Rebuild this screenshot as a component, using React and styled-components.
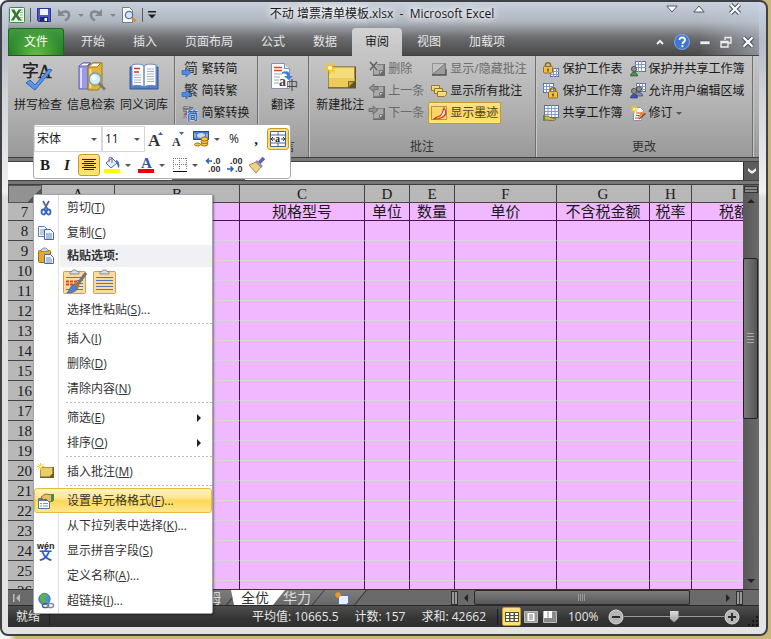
import React, { useState } from 'react';
import styled, { createGlobalStyle, css } from 'styled-components';

const columns = [
  { name: 'A', width: 73, title: '' },
  { name: 'B', width: 125, title: '' },
  { name: 'C', width: 125, title: '规格型号' },
  { name: 'D', width: 45, title: '单位' },
  { name: 'E', width: 45, title: '数量' },
  { name: 'F', width: 102, title: '单价' },
  { name: 'G', width: 93, title: '不含税金额' },
  { name: 'H', width: 42, title: '税率' },
  { name: 'I', width: 85, title: '税额' },
];

const rows = Array.from({ length: 19 }, (_, i) => i + 8);

const tabs = ['开始', '插入', '页面布局', '公式', '数据', '审阅', '视图', '加载项'];

//---------------------------------------------------------------------
// icons

const ExcelIcon = () => (
  <Icon $w={16} viewBox="0 0 16 16">
    <rect x=".5" y=".5" width="15" height="15" rx="1" fill="#f4faf2" stroke="#3d8b3f" />
    <path d="M11 3h3M11 5.500h3M11 8h3M11 10.500h3M11 13h3" stroke="#8cc08a" />
    <path d="M2 2.500h3.500L7.300 6 9.500 2.500h3L8.800 8l4 5.500H9.300L7 10l-2.300 3.500h-3L5.400 8z" fill="#2c7d32" />
  </Icon>
);

const SaveIcon = () => (
  <Icon $w={16} viewBox="0 0 16 16">
    <path d="M1.500 1.500h13v13h-12l-1-1z" fill="#4a55c8" stroke="#2b348f" />
    <path d="M4 2h8v6H4z" fill="#eef2fb" />
    <path d="M4 10h8v4.500H4z" fill="#20286b" />
    <path d="M8.500 11h2.500v3H8.500z" fill="#fff" />
  </Icon>
);

const UndoIcon = ({ flip }) => (
  <Icon $w={14} viewBox="0 0 14 14">
    <g transform={flip ? 'matrix(-1 0 0 1 14 0)' : undefined}>
      <path d="M3 6c4-4 9-3 9 1 0 3-2 4.500-4 5.500" fill="none" stroke="#85888d" strokeWidth="2.600" />
      <path d="M1 1v7h7z" fill="#85888d" />
    </g>
  </Icon>
);

const PreviewIcon = () => (
  <Icon $w={16} viewBox="0 0 16 16">
    <path d="M1.500.5h7l3 3v12h-10z" fill="#fff" stroke="#6d7c95" />
    <circle cx="8" cy="8" r="3.700" fill="#cfe6f8" stroke="#54708f" strokeWidth="1.200" />
    <path d="M11 11l3.500 3.500" stroke="#dd8a26" strokeWidth="2.600" />
  </Icon>
);

const SpellIcon = () => (
  <Icon $w={32} viewBox="0 0 32 32">
    <text x="0" y="16" fontSize="17" fontWeight="500" fontFamily="Noto Sans CJK SC, sans-serif" fill="#222">字</text>
    <text x="16" y="17" fontSize="19" fontFamily="Liberation Serif, serif" fill="#222" stroke="#222" strokeWidth=".4">A</text>
    <path d="M4 22l4-3 5 5L27 8l3 1-17 20z" fill="#5b95ea" stroke="#2f64bd" />
  </Icon>
);

const ResearchIcon = () => (
  <Icon $w={32} viewBox="0 0 32 32">
    <path d="M4 5l4-3h8l-3 3v23H4z" fill="#9a9ae8" stroke="#6464b4" />
    <path d="M4 5l4-3h7l-3 3z" fill="#fff" stroke="#6464b4" />
    <path d="M6 7v20" stroke="#dcdcfc" strokeWidth="2" />
    <path d="M13 6l5-4h9v22l-4 5H13z" fill="#e0b33a" stroke="#a07a17" />
    <path d="M13 6l5-4h8l-4 4z" fill="#fff8dc" stroke="#a07a17" />
    <path d="M15.500 8v19" stroke="#f8e08a" strokeWidth="2" />
    <circle cx="20" cy="18" r="6" fill="#d3ebf8" stroke="#7c9fae" strokeWidth="1.500" />
    <circle cx="19" cy="17" r="2.500" fill="#fff" />
    <path d="M24 22.500l6 6" stroke="#777" strokeWidth="2.600" />
  </Icon>
);

const BookIcon = () => (
  <Icon $w={32} viewBox="0 0 32 32">
    <path d="M2 6h28v22H2z" fill="#4f7fcb" stroke="#33599d" />
    <path d="M4 4c5-1.500 10-1 12 1v21c-3-2-8-2-12-1zM28 4c-5-1.500-10-1-12 1v21c3-2 8-2 12-1z" fill="#fff" stroke="#6c89b8" />
    <path d="M6 7.500h6M6 11h5" stroke="#d4302a" strokeWidth="1.500" />
    <path d="M6 14h7M6 16.500h7M6 19h7M6 21.500h7M19 8h7M19 10.500h7M19 13h7M19 15.500h7M19 18h7M19 20.500h7" stroke="#9fb0c9" />
  </Icon>
);

const ConvertIcon = ({ char, both }) => (
  <Icon $w={16} viewBox="0 0 16 16">
    <text x={both ? 0 : 2} y="12" fontSize={both ? 12 : 14} fontFamily="Noto Sans CJK SC, sans-serif" fill={both ? '#666' : '#333'}>
      {char}
    </text>
    {both ? (
      <>
        <path d="M5 5h11v11H5z" fill="#c5d2e8" />
        <text x="5" y="15" fontSize="11" fontWeight="bold" fontFamily="Noto Sans CJK SC, sans-serif" fill="#2467c4">简</text>
      </>
    ) : (
      <path d="M0 9.500h4V7l5 4.500-5 4.500v-2.500H0z" fill="#4c8ae6" stroke="#2b60b6" strokeWidth=".7" />
    )}
  </Icon>
);

const TranslateIcon = () => (
  <Icon $w={32} viewBox="0 0 32 32">
    <path d="M4.500 2.500h13l5 5v20h-18z" fill="#fff" stroke="#8292b4" />
    <path d="M17.500 2.500v5h5" fill="#dfe6f2" stroke="#8292b4" />
    <path d="M7 6.500h8M7 9.500h8" stroke="#d0492b" strokeWidth="1.500" />
    <path d="M7 13h8M7 16h6M7 19h5M7 22h5" stroke="#8ea4cc" />
    <path d="M15 11c5-2 8 0 8 4h3l-4.500 4-4.500-4h3c0-2-2-3-5-2z" fill="#3f7fdc" />
    <text x="12" y="25" fontSize="14" fontWeight="bold" fontFamily="Liberation Serif, serif" fill="#444">a</text>
    <text x="19" y="29" fontSize="12" fontFamily="Noto Sans CJK SC, sans-serif" fill="#444">中</text>
  </Icon>
);

const Burst = ({ x = 0, y = 0, s = 1 }) => (
  <g transform={`translate(${x} ${y}) scale(${s})`} stroke="#f5c518" strokeWidth="1.600">
    <path d="M6 0v12M0 6h12M1.500 1.500l9 9M10.500 1.500l-9 9" />
    <circle cx="6" cy="6" r="2" fill="#fff9c4" stroke="none" />
  </g>
);

const NewNoteIcon = () => (
  <Icon $w={32} viewBox="0 0 32 32">
    <path d="M4 5.500h28v22H4z" fill="#5f5228" />
    <path d="M4.500 6h26v14l-6 6h-20z" fill="#f3dc7c" stroke="#a58b32" />
    <path d="M5 17h25.500v3l-6 6H5z" fill="#ecca5c" />
    <path d="M24.500 26v-5.500h6z" fill="#c8a640" stroke="#7e6720" />
    <Burst x={0} y={1} />
  </Icon>
);

const GreyNoteIcon = ({ kind }) => (
  <Icon $w={16} viewBox="0 0 16 16">
    <path d="M4 3h12v12H4z" fill="#6a6a6a" />
    <path d="M4.500 3.500h10v6l-4 4h-6z" fill="#a9a9a9" stroke="#808080" />
    <path d="M10.500 13.500v-4h4z" fill="#c4c4c4" stroke="#777" />
    {kind === 'delete' && (
      <>
        <path d="M1 1l7 8M8 1L1 9" stroke="#c0c0c0" strokeWidth="3.400" />
        <path d="M1 1l7 8M8 1L1 9" stroke="#606060" strokeWidth="1.600" />
      </>
    )}
    {kind === 'prev' && <path d="M0 5l5-4v2.500h4v3H5V9z" fill="#909090" stroke="#5c5c5c" strokeWidth=".7" />}
    {kind === 'next' && <path d="M9 5L4 1v2.500H0v3h4V9z" fill="#909090" stroke="#5c5c5c" strokeWidth=".7" />}
  </Icon>
);

const ToggleNoteIcon = () => (
  <Icon $w={16} viewBox="0 0 16 16">
    <path d="M1.500 2.500h13v11h-13z" fill="none" stroke="#666" strokeDasharray="1 1" />
    <path d="M14.500 2.500v11h-13z" fill="#9c9c9c" stroke="#777" />
    <path d="M1 14h14V8" fill="none" stroke="#555" strokeWidth="1.400" />
  </Icon>
);

const AllNotesIcon = () => (
  <Icon $w={16} viewBox="0 0 16 16">
    <g fill="#f5dc78" stroke="#94792a">
      <path d="M.5 2.500h8v5h-8z" />
      <path d="M3.500 5.500h8v5h-8z" />
      <path d="M6.500 8.500h9v3l-2 2h-7z" />
    </g>
  </Icon>
);

const InkIcon = () => (
  <Icon $w={16} viewBox="0 0 16 16">
    <path d="M.5 1.500h15v13H.5z" fill="none" stroke="#6a5420" strokeDasharray="1 1" />
    <path d="M13 3c3 4 2 8-7 9 4-2 4-5 7-9z" fill="#fff" />
    <path d="M3 14c3-3 5-2 7-4s2-5 3-7c3 4 2 8-3 10-2 1-5 1-7 1z" fill="none" stroke="#d2332b" strokeWidth="1.200" />
  </Icon>
);

const TableMark = ({ x, y, w, h }) => (
  <g>
    <rect x={x + 0.5} y={y + 0.5} width={w - 1} height={h - 1} fill="#fff" stroke="#5671a8" />
    <path
      d={`M${x} ${y + 3.5}h${w}M${x} ${y + 6.5}h${w}M${x + 3.5} ${y}v${h}M${x + 6.5} ${y}v${h}`}
      stroke="#8499c4"
    />
  </g>
);

const Lock = ({ x, y }) => (
  <g transform={`translate(${x} ${y})`}>
    <path d="M2.500 5V3c0-3 5-3 5 0v2" fill="none" stroke="#8c6a1d" strokeWidth="1.600" />
    <rect x=".5" y="4.500" width="9" height="6.500" rx="1" fill="#f1bd49" stroke="#9b6f16" />
    <path d="M5 6.500v3" stroke="#5c420d" strokeWidth="1.400" />
  </g>
);

const Person = ({ x, y, color }) => (
  <g transform={`translate(${x} ${y})`}>
    <circle cx="4" cy="3" r="2.600" fill="#8c8c8c" stroke="#444" strokeWidth=".8" />
    <path d="M.5 10c0-5 7-5 7 0z" fill={color} stroke="#333" strokeWidth=".6" />
  </g>
);

const ProtectSheetIcon = () => (
  <Icon $w={16} viewBox="0 0 16 16">
    <TableMark x={7} y={7} w={9} h={9} />
    <Lock x={0} y={1} />
  </Icon>
);

const ProtectBookIcon = () => (
  <Icon $w={16} viewBox="0 0 16 16">
    <TableMark x={0} y={0} w={11} h={10} />
    <Lock x={5} y={4} />
  </Icon>
);

const ShareBookIcon = () => (
  <Icon $w={16} viewBox="0 0 16 16">
    <rect x="1.500" y=".5" width="14" height="12" fill="#fff" stroke="#5671a8" />
    <path d="M1.500 3.500h14M1.500 6.500h14M1.500 9.500h14M5 .5v12M8.500.5v12M12 .5v12" stroke="#8499c4" />
    <path d="M1 11h3l5 2h4c0 2-3 3-5 2.500L3 15H1z" fill="#d6b257" stroke="#665022" strokeWidth=".7" />
    <path d="M0 10h2v6H0z" fill="#4a9146" />
  </Icon>
);

const ProtectShareIcon = () => (
  <Icon $w={16} viewBox="0 0 16 16">
    <TableMark x={5} y={0} w={11} h={11} />
    <Person x={0} y={5} color="#3c9a3f" />
  </Icon>
);

const UsersIcon = () => (
  <Icon $w={16} viewBox="0 0 16 16">
    <TableMark x={6} y={0} w={10} h={9} />
    <Person x={5} y={3} color="#7a90c4" />
    <Person x={0} y={5} color="#3457c9" />
  </Icon>
);

const TrackIcon = () => (
  <Icon $w={16} viewBox="0 0 16 16">
    <path d="M3.500 2.500h7l3 3-2 10h-8z" fill="#fff" stroke="#8a93a8" />
    <path d="M6 8h6M6 10.500h5M5 13h4" stroke="#c9402c" />
    <path d="M15 8l-7 5 3-6z" fill="#e87d34" />
    <path d="M15.500 8.500L9 14" stroke="#8c4318" strokeWidth="1.600" />
    <Burst x={0} y={0} s={0.7} />
  </Icon>
);

const GrowIcon = ({ shrink }) => (
  <Icon $w={16} viewBox="0 0 16 16">
    <text x={shrink ? 2 : 0} y="15" fontSize={shrink ? 12 : 17} fontWeight="bold" fontFamily="Liberation Serif, serif" fill="#333">
      A
    </text>
    <path d={shrink ? 'M9 1h5l-2.500 3z' : 'M10 4h5l-2.500-3z'} fill="#3c5fae" />
  </Icon>
);

const MoneyIcon = () => (
  <Icon $w={16} viewBox="0 0 16 16">
    <rect x=".5" y=".5" width="15" height="8" fill="#4f7cc4" stroke="#284e94" />
    <ellipse cx="8" cy="4.500" rx="4" ry="2.500" fill="#c8dcf5" />
    <path d="M2 2.500v4M14 2.500v4" stroke="#c8dcf5" />
    <g fill="#f3c74a" stroke="#a06e10">
      <ellipse cx="11.500" cy="13" rx="3.500" ry="2" />
      <ellipse cx="11.500" cy="10.500" rx="3.500" ry="2" />
      <ellipse cx="11.500" cy="8" rx="3.500" ry="2" />
      <ellipse cx="4.500" cy="13.500" rx="3" ry="1.500" />
    </g>
  </Icon>
);

const MergeIcon = () => (
  <Icon $w={16} viewBox="0 0 16 16">
    <path d="M.5.5h15v15H.5z" fill="#fff" stroke="#4467a5" />
    <path d="M.5 4h15M.5 12h15M8 .5V4M8 12v3.500" stroke="#4467a5" />
    <path d="M1 8h4M11 8h4M3 6L1 8l2 2M13 6l2 2-2 2" fill="none" stroke="#333" />
    <text x="5" y="11" fontSize="10" fontWeight="bold" fontFamily="Liberation Serif, serif" fill="#222">a</text>
  </Icon>
);

const CenterIcon = () => (
  <Icon $w={16} viewBox="0 0 16 16">
    <path d="M1 2.500h14M3 4.500h10M1 6.500h14M3 8.500h10M1 10.500h14M3 12.500h10" stroke="#222" />
  </Icon>
);

const FillIcon = () => (
  <Icon $w={16} viewBox="0 0 16 16">
    <path d="M2 6l6-5 5 5-6 5z" fill="#e5ecf7" stroke="#56709c" />
    <path d="M5 5V1c0-1 3-1 3 0v5" fill="none" stroke="#56709c" />
    <path d="M12 3c3 1 4 4 3 8-2-1-1-4-3-5z" fill="#3f6fc0" />
    <path d="M0 12h16v4H0z" fill="#ffff00" />
  </Icon>
);

const FontColorIcon = () => (
  <Icon $w={16} viewBox="0 0 16 16">
    <text x="3" y="11" fontSize="15" fontWeight="bold" fontFamily="Liberation Serif, serif" fill="#3457a6">A</text>
    <path d="M0 12h16v4H0z" fill="#f00000" />
  </Icon>
);

const BorderIcon = () => (
  <Icon $w={14} viewBox="0 0 14 14">
    <path d="M0 .5h14M0 6.500h14M.5 0v12M6.500 0v12M13.500 0v12" fill="none" stroke="#777" strokeDasharray="1 1" />
    <path d="M0 13.500h14" stroke="#111" />
  </Icon>
);

const DecimalIcon = ({ less }) => (
  <Icon $w={16} viewBox="0 0 16 16">
    <g fontSize="9" fontWeight="bold" fontFamily="Liberation Sans, sans-serif" fill="#333">
      <text x={less ? 3 : 8} y="7">{less ? '.00' : '.0'}</text>
      <text x={less ? 8 : 3} y="15">{less ? '.0' : '.00'}</text>
    </g>
    <path
      d={less ? 'M0 12h5M3.500 9.500L6 12l-2.500 2.500' : 'M7 4H2M4 1.500L1.500 4 4 6.500'}
      fill="none"
      stroke="#2e62b8"
      strokeWidth="1.500"
    />
  </Icon>
);

const BrushIcon = () => (
  <Icon $w={16} viewBox="0 0 16 16">
    <path d="M15 1l-5 5" stroke="#6a5fae" strokeWidth="3.500" />
    <path d="M0 8l7-3 5 5-5 6z" fill="#eed182" stroke="#957327" strokeWidth=".8" />
    <path d="M7 4l6 6" stroke="#8b93a3" strokeWidth="2.500" />
  </Icon>
);

const CutIcon = () => (
  <Icon $w={16} viewBox="0 0 16 16">
    <path d="M5 1l5 9M11 1L6 10" stroke="#56688a" strokeWidth="1.700" />
    <ellipse cx="5.500" cy="12" rx="2" ry="2.500" fill="none" stroke="#3468c8" strokeWidth="1.800" />
    <ellipse cx="10.500" cy="12" rx="2" ry="2.500" fill="none" stroke="#3468c8" strokeWidth="1.800" />
  </Icon>
);

const CopyIcon = () => (
  <Icon $w={16} viewBox="0 0 16 16">
    <path d="M.5 1.500h6l3 3v7h-9z" fill="#f3f7fd" stroke="#5b80bd" />
    <path d="M2 5h5M2 7h5M2 9h5" stroke="#7fa0d4" />
    <path d="M6.500 4.500h6l3 3v7h-9z" fill="#f3f7fd" stroke="#3f69ad" />
    <path d="M8 9h6M8 11h6M8 13h6" stroke="#5f88c8" />
  </Icon>
);

const PasteIcon = () => (
  <Icon $w={16} viewBox="0 0 16 16">
    <rect x=".5" y="2.500" width="12" height="12" rx="1" fill="#e2a92e" stroke="#96701c" />
    <path d="M3 3.500h7V2L8 0H5L3 2z" fill="#d3d6dc" stroke="#777" strokeWidth=".7" />
    <path d="M6.500 6.500h6l3 3v6h-9z" fill="#f3f7fd" stroke="#4c6a9e" />
    <path d="M8 10h5M8 12h6M8 14h6" stroke="#6c8cc4" />
  </Icon>
);

const ClipboardIcon = ({ brush }) => (
  <Icon $w={24} viewBox="0 0 24 24">
    <rect x=".5" y="1.500" width="22" height="22" rx="1" fill="#fcd9a0" stroke="#cf9f55" />
    <path d="M7 4V1.500h2L10 0h3l1 1.500h2V4z" fill="#d8dde4" stroke="#6f7b8c" strokeWidth=".8" />
    <path d="M3 7.500h17M3 10.500h17M3 13.500h17M3 16.500h17M3 19.500h17" stroke="#5577b8" />
    {brush && (
      <>
        <path d="M2 10h12v7H2z" fill="#fcd9a0" />
        <path d="M3 11.500h12M3 14.500h10" stroke="#e0441e" strokeWidth="2" strokeDasharray="3 1" />
        <path d="M23 3l-9 12" stroke="#6f7277" strokeWidth="3" />
        <path d="M11 14l4 4c-2 4-6 5-11 5 3-3 3-7 7-9z" fill="#4d80c9" stroke="#355b97" strokeWidth=".6" />
        <path d="M12 12l5 4-2 2-4-4z" fill="#b7752f" />
      </>
    )}
  </Icon>
);

const InsertNoteIcon = () => (
  <Icon $w={16} viewBox="0 0 16 16">
    <path d="M2 3h14v11H2z" fill="#6e5c20" />
    <path d="M2.500 3.500h12v6l-3 3h-9z" fill="#e9cf67" />
    <Burst x={-1} y={-1} s={0.6} />
  </Icon>
);

const FormatIcon = () => (
  <Icon $w={16} viewBox="0 0 16 16">
    <path d="M.5 5.500h11v10H.5z" fill="#fff" stroke="#5b76ae" />
    <path d="M.5 7h11" stroke="#5b76ae" strokeWidth="2" />
    <path d="M2 10.500h2M5 10.500h5M2 13h2M5 13h5" stroke="#7c92bf" strokeWidth="1.200" />
    <path d="M3 4l4-3 8 1v6l-4 1-3-3-3 1z" fill="#e7bd69" stroke="#6d5626" strokeWidth=".8" />
    <path d="M13 1h3v7h-3z" fill="#36954b" />
  </Icon>
);

const PinyinIcon = () => (
  <Icon $w={18} viewBox="0 0 18 18">
    <text x="0" y="7" fontSize="9" fontWeight="bold" fontFamily="Liberation Sans, sans-serif" fill="#222">wén</text>
    <text x="2" y="17" fontSize="13" fontWeight="bold" fontFamily="Noto Sans CJK SC, sans-serif" fill="#2b57c8">文</text>
  </Icon>
);

const LinkIcon = () => (
  <Icon $w={16} viewBox="0 0 16 16">
    <circle cx="6.500" cy="6" r="5.700" fill="#4b93df" stroke="#2c5f94" strokeWidth=".8" />
    <path d="M4 1c3-1 5 0 5 2S6 4 6 6s3 1 3 3-3 2-4 1S1 6 2 4z" fill="#5db546" />
    <rect x="4.500" y="10.500" width="6" height="4" rx="2" fill="none" stroke="#4f6283" strokeWidth="1.500" />
    <rect x="9.500" y="10.500" width="6" height="4" rx="2" fill="none" stroke="#7b8ca8" strokeWidth="1.500" />
  </Icon>
);

const HelpIcon = () => (
  <Icon $w={16} viewBox="0 0 16 16">
    <circle cx="8" cy="8" r="7.500" fill="#3f78d4" stroke="#7da7e8" />
    <path d="M5.500 6c0-3.500 5.500-3.200 5.500 0 0 2-2.500 2-2.500 4" fill="none" stroke="#fff" strokeWidth="1.800" />
    <circle cx="8.400" cy="12.200" r="1.100" fill="#fff" />
  </Icon>
);

const Chevron = ({ up }) => (
  <Icon $w={12} viewBox="0 0 12 12">
    <path d={up ? 'M.8 9h10.400L6 3z' : 'M.8 3h10.400L6 9z'} fill="#fff" stroke="#4c5562" />
  </Icon>
);

const CrossIcon = () => (
  <Icon $w={12} viewBox="0 0 12 12">
    <path d="M1.500 1.500l9 9M10.500 1.500l-9 9" stroke="#4c5562" strokeWidth="4.400" />
    <path d="M1.500 1.500l9 9M10.500 1.500l-9 9" stroke="#fff" strokeWidth="2.200" />
  </Icon>
);

const CollapseIcon = () => (
  <Icon $w={8} viewBox="0 0 8 8"><path d="M1 6l3-3 3 3" fill="none" stroke="#eee" strokeWidth="2" /></Icon>
);
const MinIcon = () => (
  <Icon $w={10} viewBox="0 0 10 10"><path d="M0 4h10v3.500H0z" fill="#eee" stroke="#555" strokeWidth=".6" /></Icon>
);
const RestoreIcon = () => (
  <Icon $w={12} viewBox="0 0 12 12">
    <path d="M5 4V1.500h6V7H8M1 5.500h7V11H1zM1 6.500h7" fill="none" stroke="#eee" strokeWidth="1.400" />
  </Icon>
);

const ArrowIcon = ({ d, color = '#222' }) => (
  <Icon $w={8} viewBox="0 0 8 8"><path d={d} fill={color} /></Icon>
);

const NormalViewIcon = () => (
  <Icon $w={14} viewBox="0 0 14 14">
    <path d="M0 2h14v10H0z" fill="#5c5130" />
    <path d="M1 3h3v2H1zM5.500 3h3v2h-3zM10 3h3v2h-3zM1 6h3v2H1zM5.500 6h3v2h-3zM10 6h3v2h-3zM1 9h3v2H1zM5.500 9h3v2h-3zM10 9h3v2h-3z" fill="#fff" />
  </Icon>
);
const PageViewIcon = () => (
  <Icon $w={14} viewBox="0 0 14 14">
    <path d="M.5 1.500h13v11H.5z" fill="#9a9a9a" stroke="#bbb" />
    <path d="M3.500 3h7v8h-7z" fill="#fff" />
    <path d="M5 5h4M5 7h4M5 9h4" stroke="#777" />
  </Icon>
);
const BreakViewIcon = () => (
  <Icon $w={14} viewBox="0 0 14 14">
    <path d="M.5 1.500h13v11H.5z" fill="#8a8a8a" stroke="#bbb" />
    <path d="M1 1h3.500v7H1zM5.500 1H9v7H5.500z" fill="#fff" />
  </Icon>
);
const ZoomIcon = ({ plus }) => (
  <Icon $w={16} viewBox="0 0 16 16">
    <circle cx="8" cy="8" r="7" fill="#b5b5b5" stroke="#ddd" />
    <path d={plus ? 'M4 8h8M8 4v8' : 'M4 8h8'} stroke="#2c2c2c" strokeWidth="2" />
  </Icon>
);
const GripIcon = () => (
  <Icon $w={12} viewBox="0 0 12 12">
    <path d="M9 1h2v2H9zM9 5h2v2H9zM5 5h2v2H5zM9 9h2v2H9zM5 9h2v2H5zM1 9h2v2H1z" fill="#161616" />
  </Icon>
);
const NewSheetIcon = () => (
  <Icon $w={16} viewBox="0 0 16 16">
    <path d="M4.500 5.500h10v7l-2 2h-8z" fill="#e8eefc" stroke="#5c73ad" />
    <path d="M4 2v6M1 5h6M2 3l4 4M6 3L2 7" stroke="#f09a25" strokeWidth="1.300" />
  </Icon>
);

//---------------------------------------------------------------------

const menuItems = [
  { type: 'item', icon: <CutIcon />, label: '剪切', hotkey: 'T' },
  { type: 'item', icon: <CopyIcon />, label: '复制', hotkey: 'C' },
  { type: 'heading', icon: <PasteIcon />, label: '粘贴选项:' },
  { type: 'paste' },
  { type: 'item', label: '选择性粘贴', hotkey: 'S', dots: true },
  { type: 'separator' },
  { type: 'item', label: '插入', hotkey: 'I' },
  { type: 'item', label: '删除', hotkey: 'D' },
  { type: 'item', label: '清除内容', hotkey: 'N' },
  { type: 'separator' },
  { type: 'item', label: '筛选', hotkey: 'E', submenu: true },
  { type: 'item', label: '排序', hotkey: 'O', submenu: true },
  { type: 'separator' },
  { type: 'item', icon: <InsertNoteIcon />, label: '插入批注', hotkey: 'M' },
  { type: 'separator' },
  { type: 'item', icon: <FormatIcon />, label: '设置单元格格式', hotkey: 'F', dots: true, hot: true },
  { type: 'item', label: '从下拉列表中选择', hotkey: 'K', dots: true },
  { type: 'item', icon: <PinyinIcon />, label: '显示拼音字段', hotkey: 'S' },
  { type: 'item', label: '定义名称', hotkey: 'A', dots: true },
  { type: 'item', icon: <LinkIcon />, label: '超链接', hotkey: 'I', dots: true },
];

const ContextMenu = () => (
  <Menu>
    {menuItems.map((item, i) => {
      if (item.type === 'separator') return <MenuSeparator key={i} />;
      if (item.type === 'heading') {
        return (
          <MenuHeading key={i}>
            <MenuIcon>{item.icon}</MenuIcon>
            <span>{item.label}</span>
          </MenuHeading>
        );
      }
      if (item.type === 'paste') {
        return (
          <PasteRow key={i}>
            <PasteButton aria-label="粘贴"><ClipboardIcon brush /></PasteButton>
            <PasteButton aria-label="只保留文本"><ClipboardIcon /></PasteButton>
          </PasteRow>
        );
      }
      return (
        <MenuItem key={i} $hot={item.hot}>
          <MenuIcon>{item.icon}</MenuIcon>
          <span>
            {item.label}(<u>{item.hotkey}</u>){item.dots && '...'}
          </span>
          {item.submenu && <SubmenuArrow><ArrowIcon d="M2 0v8l4-4z" /></SubmenuArrow>}
        </MenuItem>
      );
    })}
  </Menu>
);

//---------------------------------------------------------------------

const MiniToolbar = () => (
  <Mini>
    <MiniRow>
      <Combo $w={68}>
        <select aria-label="字体" defaultValue="宋体"><option>宋体</option></select>
        <Caret />
      </Combo>
      <Combo $w={43}>
        <select aria-label="字号" defaultValue="11"><option>11</option></select>
        <Caret />
      </Combo>
      <MiniButton aria-label="增大字号"><GrowIcon /></MiniButton>
      <MiniButton aria-label="减小字号"><GrowIcon shrink /></MiniButton>
      <MiniButton $wide aria-label="会计数字格式"><MoneyIcon /><Caret /></MiniButton>
      <MiniButton>%</MiniButton>
      <MiniButton $serif>,</MiniButton>
      <MiniButton $on aria-label="合并后居中"><MergeIcon /></MiniButton>
    </MiniRow>
    <MiniRow>
      <MiniButton $serif>B</MiniButton>
      <MiniButton $serif $italic>I</MiniButton>
      <MiniButton $on aria-label="居中"><CenterIcon /></MiniButton>
      <MiniButton $wide aria-label="填充颜色"><FillIcon /><Caret /></MiniButton>
      <MiniButton $wide aria-label="字体颜色"><FontColorIcon /><Caret /></MiniButton>
      <MiniButton $wide aria-label="边框"><BorderIcon /><Caret /></MiniButton>
      <MiniButton aria-label="增加小数位数"><DecimalIcon /></MiniButton>
      <MiniButton aria-label="减少小数位数"><DecimalIcon less /></MiniButton>
      <MiniButton aria-label="格式刷"><BrushIcon /></MiniButton>
    </MiniRow>
  </Mini>
);

//---------------------------------------------------------------------

const Ribbon = () => (
  <RibbonBar>
    <Group $w={167}>
      <GroupBody>
        <BigButton><SpellIcon />拼写检查</BigButton>
        <BigButton><ResearchIcon />信息检索</BigButton>
        <BigButton><BookIcon />同义词库</BigButton>
      </GroupBody>
      <GroupLabel>校对</GroupLabel>
    </Group>
    <Group $w={83}>
      <GroupBody>
        <ButtonColumn>
          <SmallButton><ConvertIcon char="简" />繁转简</SmallButton>
          <SmallButton><ConvertIcon char="繁" />简转繁</SmallButton>
          <SmallButton><ConvertIcon char="繁" both />简繁转换</SmallButton>
        </ButtonColumn>
      </GroupBody>
      <GroupLabel>中文简繁转换</GroupLabel>
    </Group>
    <Group $w={51}>
      <GroupBody>
        <BigButton><TranslateIcon />翻译</BigButton>
      </GroupBody>
      <GroupLabel>语言</GroupLabel>
    </Group>
    <Group $w={227}>
      <GroupBody>
        <BigButton><NewNoteIcon />新建批注</BigButton>
        <ButtonColumn>
          <SmallButton disabled><GreyNoteIcon kind="delete" />删除</SmallButton>
          <SmallButton disabled><GreyNoteIcon kind="prev" />上一条</SmallButton>
          <SmallButton disabled><GreyNoteIcon kind="next" />下一条</SmallButton>
        </ButtonColumn>
        <ButtonColumn>
          <SmallButton disabled><ToggleNoteIcon />显示/隐藏批注</SmallButton>
          <SmallButton><AllNotesIcon />显示所有批注</SmallButton>
          <SmallButton $on><InkIcon />显示墨迹</SmallButton>
        </ButtonColumn>
      </GroupBody>
      <GroupLabel>批注</GroupLabel>
    </Group>
    <Group $w={217}>
      <GroupBody>
        <ButtonColumn>
          <SmallButton><ProtectSheetIcon />保护工作表</SmallButton>
          <SmallButton><ProtectBookIcon />保护工作簿</SmallButton>
          <SmallButton><ShareBookIcon />共享工作簿</SmallButton>
        </ButtonColumn>
        <ButtonColumn>
          <SmallButton><ProtectShareIcon />保护并共享工作簿</SmallButton>
          <SmallButton><UsersIcon />允许用户编辑区域</SmallButton>
          <SmallButton><TrackIcon />修订<Caret /></SmallButton>
        </ButtonColumn>
      </GroupBody>
      <GroupLabel>更改</GroupLabel>
    </Group>
  </RibbonBar>
);

//---------------------------------------------------------------------

const Sheet = () => (
  <SheetArea>
    <SheetView>
      <Grid>
        <colgroup>
          <Col $w={34} />
          {columns.map(c => <Col key={c.name} $w={c.width} />)}
        </colgroup>
        <thead>
          <tr>
            <Corner aria-label="全选" />
            {columns.map(c => <ColHead key={c.name} scope="col">{c.name}</ColHead>)}
          </tr>
        </thead>
        <tbody>
          <tr>
            <RowHead scope="row" $title>7</RowHead>
            {columns.map(c => <Cell key={c.name} $title>{c.title}</Cell>)}
          </tr>
          {rows.map(n => (
            <tr key={n}>
              <RowHead scope="row">{n}</RowHead>
              {columns.map(c => <Cell key={c.name} />)}
            </tr>
          ))}
        </tbody>
      </Grid>
    </SheetView>
    <VScroll>
      <SplitHandle />
      <ScrollArrow aria-label="向上滚动"><ArrowIcon d="M0 6h8L4 2z" /></ScrollArrow>
      <VTrackTop />
      <VThumb />
      <VTrackBottom />
      <ScrollArrow aria-label="向下滚动"><ArrowIcon d="M0 2h8L4 6z" /></ScrollArrow>
    </VScroll>
  </SheetArea>
);

//---------------------------------------------------------------------

const App = () => {
  const [zoom, setZoom] = useState(100);
  const [formula, setFormula] = useState('');

  return (
    <>
      <GlobalStyle />
      <Page>
        <Window>
          <TopArea>
            <TitleBar>
              <QuickAccess>
                <ExcelIcon />
                <Divider />
                <IconButton aria-label="保存"><SaveIcon /></IconButton>
                <IconButton aria-label="撤消"><UndoIcon /><Caret $dim /></IconButton>
                <IconButton aria-label="恢复"><UndoIcon flip /><Caret $dim /></IconButton>
                <IconButton aria-label="打印预览"><PreviewIcon /></IconButton>
                <Divider />
                <IconButton aria-label="自定义">
                  <ArrowIcon d="M0 0h8v1.500H0zM0 3.500h8L4 7.500z" />
                </IconButton>
              </QuickAccess>
              <Title>不动 增票清单模板.xlsx&nbsp; -&nbsp; Microsoft Excel</Title>
              <WindowButtons>
                <IconButton aria-label="最小化"><Chevron /></IconButton>
                <IconButton aria-label="最大化"><Chevron up /></IconButton>
                <CloseButton aria-label="关闭"><CrossIcon /></CloseButton>
              </WindowButtons>
            </TitleBar>
            <TabRow>
              <FileTab>文件</FileTab>
              {tabs.map(t => <Tab key={t} $active={t === '审阅'}>{t}</Tab>)}
              <BookButtons>
                <IconButton aria-label="折叠功能区"><CollapseIcon /></IconButton>
                <IconButton aria-label="帮助"><HelpIcon /></IconButton>
                <IconButton aria-label="最小化工作簿"><MinIcon /></IconButton>
                <IconButton aria-label="还原工作簿"><RestoreIcon /></IconButton>
                <IconButton aria-label="关闭工作簿"><CrossIcon /></IconButton>
              </BookButtons>
            </TabRow>
          </TopArea>

          <Ribbon />
          <Strip />
          <FormulaBar>
            <NameBox aria-label="名称框" readOnly />
            <FormulaTools />
            <FormulaInput aria-label="编辑栏" value={formula} onChange={e => setFormula(e.target.value)} />
            <ExpandButton aria-label="展开编辑栏"><ArrowIcon color="#eee" d="M0 1l4 3 4-3v3L4 7 0 4z" /></ExpandButton>
          </FormulaBar>
          <Strip />
          <Sheet />

          <SheetBar>
            <SheetNav>
              <ArrowIcon color="#bbb" d="M0 0h1.500v8H0zM7 0v8L3 4z" />
              <ArrowIcon color="#bbb" d="M6 0v8L2 4z" />
              <ArrowIcon color="#bbb" d="M2 0v8l4-4z" />
              <ArrowIcon color="#bbb" d="M6.500 0H8v8H6.500zM1 0v8l4-4z" />
            </SheetNav>
            <SheetTab>姆</SheetTab>
            <SheetTab $active>全优</SheetTab>
            <SheetTab>华力</SheetTab>
            <SheetTab aria-label="插入工作表"><NewSheetIcon /></SheetTab>
            <HScroll>
              <HSplit />
              <ScrollArrow aria-label="向左滚动"><ArrowIcon d="M6 0v8L2 4z" /></ScrollArrow>
              <HThumb />
              <HTrack />
              <ScrollArrow aria-label="向右滚动"><ArrowIcon d="M2 0v8l4-4z" /></ScrollArrow>
              <HSplit />
            </HScroll>
          </SheetBar>

          <StatusBar>
            <Ready>就绪</Ready>
            <Stats>
              <span>平均值: 10665.5</span>
              <span>计数: 157</span>
              <span>求和: 42662</span>
            </Stats>
            <Views>
              <ViewButton $on aria-label="普通"><NormalViewIcon /></ViewButton>
              <ViewButton aria-label="页面布局"><PageViewIcon /></ViewButton>
              <ViewButton aria-label="分页预览"><BreakViewIcon /></ViewButton>
            </Views>
            <ZoomLabel htmlFor="zoom">{zoom}%</ZoomLabel>
            <IconButton aria-label="缩小" onClick={() => setZoom(zoom - 10)}><ZoomIcon /></IconButton>
            <ZoomSlider id="zoom" type="range" min="10" max="190" value={zoom} onChange={e => setZoom(Number(e.target.value))} />
            <IconButton aria-label="放大" onClick={() => setZoom(zoom + 10)}><ZoomIcon plus /></IconButton>
            <Grip><GripIcon /></Grip>
          </StatusBar>

          <MiniToolbar />
          <ContextMenu />
        </Window>
      </Page>
    </>
  );
};

export default App;

//---------------------------------------------------------------------

const GlobalStyle = createGlobalStyle`
  * {
    box-sizing: border-box;
  }
  body {
    margin: 0;
    font-family: 'Open Sans', 'Noto Sans CJK SC', sans-serif;
    font-size: 12px;
    line-height: 16px;
    color: #1a1a1a;
  }
  button, input, select {
    margin: 0;
    padding: 0;
    border: 0;
    background: none;
    font: inherit;
    color: inherit;
  }
`;

const Icon = styled.svg`
  display: block;
  flex: none;
  width: ${p => p.$w}px;
  height: ${p => p.$w}px;
  overflow: visible;
`;

const Caret = styled.i`
  flex: none;
  border: 3px solid transparent;
  border-bottom: 0;
  border-top-color: ${p => (p.$dim ? '#80848a' : '#555')};
`;

const highlight = css`
  border: 1px solid #c29b29;
  background: linear-gradient(#fde48c, #fbd160 45%, #ffe774);
`;

const Page = styled.div`
  height: 100vh;
  padding: 0 3px 3px 0;
  background: linear-gradient(to right, #f4f4f4 8px, #c9b978 16px);
`;

const Window = styled.main`
  position: relative;
  display: flex;
  flex-direction: column;
  height: 100%;
  padding: 0 7px 7px 6px;
  border: 2px solid #3f4145;
  border-radius: 8px;
  background: linear-gradient(#cbd5e3, #b4bcc8 40px, #d4d6d9 100px, #f0f0f0 190px, #dedede 196px, #e4e4e4);
  overflow: hidden;
`;

const TopArea = styled.header`
  position: relative;
  flex: none;
  border-bottom: 1px solid #414141;

  &::before {
    content: '';
    position: absolute;
    inset: 0;
    background: linear-gradient(#c8d0dc, #aeb5bf 20px, #8c8f94 28px, #696b6e 36px, #484848 54px);
    mask-image: linear-gradient(to right, #000 92%, rgba(0, 0, 0, 0.4));
  }
`;

const TitleBar = styled.div`
  position: relative;
  display: flex;
  justify-content: space-between;
  height: 26px;
`;

const QuickAccess = styled.div`
  display: flex;
  flex: 1;
  align-items: center;
  gap: 5px;
  padding-left: 1px;
`;

const Divider = styled.span`
  width: 1px;
  height: 14px;
  background: #555c66;
`;

const IconButton = styled.button`
  display: flex;
  align-items: center;
  gap: 7px;
`;

const Title = styled.h1`
  margin: 0;
  padding-left: 14px;
  font-size: 12px;
  font-weight: normal;
  line-height: 24px;
  white-space: nowrap;
  text-shadow: 0 0 6px #fff, 0 0 8px #fff, 0 0 10px #eef2f8;
`;

const WindowButtons = styled.div`
  display: flex;
  flex: 1;
  justify-content: flex-end;
  gap: 15px;
  height: 14px;
  padding-right: 18px;
`;

const CloseButton = styled(IconButton)`
  margin-left: 9px;
`;

const TabRow = styled.nav`
  position: relative;
  display: flex;
  height: 27px;
`;

const FileTab = styled.button`
  width: 56px;
  margin-right: 3px;
  border: 1px solid #1d6b1f;
  border-bottom: 0;
  border-radius: 3px 3px 0 0;
  background: radial-gradient(ellipse at 50% 110%, #6cc142, transparent 75%), linear-gradient(#3f9a3f, #1f7a26);
  color: #fff;
`;

const Tab = styled.button`
  margin: 0 1px;
  padding: 0 13px;
  border-radius: 4px 4px 0 0;
  color: #e6e6e6;
  ${p => p.$active && css`
    margin-bottom: -1px;
    background: linear-gradient(#d2d2d2, #c4c4c4);
    color: #1a1a1a;
  `}
`;

const BookButtons = styled.div`
  display: flex;
  align-items: center;
  gap: 10px;
  margin-left: auto;
  padding-right: 5px;
`;

const RibbonBar = styled.section`
  display: flex;
  flex: none;
  height: 101px;
  background: linear-gradient(#c5c5c5, #b2b2b2 50%, #999);
`;

const Group = styled.div`
  display: flex;
  flex: none;
  flex-direction: column;
  width: ${p => p.$w}px;
  border-right: 1px solid #6f6f6f;
  box-shadow: 1px 0 #c8c8c8;
`;

const GroupBody = styled.div`
  display: flex;
  flex: 1;
  justify-content: center;
  padding-top: 2px;
`;

const GroupLabel = styled.div`
  height: 18px;
  color: #333;
  text-align: center;
  white-space: nowrap;
`;

const BigButton = styled.button`
  display: flex;
  flex-direction: column;
  align-items: center;
  gap: 4px;
  min-width: 50px;
  height: 60px;
  padding: 3px 2px 0;
  white-space: nowrap;
  & + & {
    margin-left: 1px;
  }
`;

const ButtonColumn = styled.div`
  display: flex;
  flex-direction: column;
  align-items: flex-start;
  & + & {
    margin-left: 1px;
  }
`;

const SmallButton = styled.button`
  display: flex;
  align-items: center;
  gap: 3px;
  height: 22px;
  padding: 0 2px;
  border: 1px solid transparent;
  border-radius: 2px;
  white-space: nowrap;
  &:disabled {
    color: #6b6b6b;
  }
  ${p => p.$on && css`
    ${highlight}
    color: #4d4428;
  `}
`;

const Strip = styled.div`
  flex: none;
  height: 5px;
  border: solid #3f3f3f;
  border-width: 1px 0;
  background: #777;
`;

const FormulaBar = styled.div`
  display: flex;
  flex: none;
  height: 18px;
  background: #fff;
`;

const NameBox = styled.input`
  width: 164px;
`;

const FormulaTools = styled.div`
  width: 73px;
  background: #6a6a6a;
`;

const FormulaInput = styled.input`
  flex: 1;
  min-width: 0;
  outline: 0;
`;

const ExpandButton = styled.button`
  display: flex;
  align-items: center;
  justify-content: center;
  width: 16px;
  border-left: 1px solid #333;
  background: #5c5c5c;
`;

const SheetArea = styled.section`
  display: flex;
  flex: 1;
  min-height: 0;
`;

const SheetView = styled.div`
  flex: 1;
  min-width: 0;
  background: #f0b8ff;
  overflow: hidden;
`;

const Grid = styled.table`
  table-layout: fixed;
  width: 1px;
  border-spacing: 0;
  font-family: 'Liberation Serif', 'Noto Sans CJK SC', serif;
  font-size: 15px;
  line-height: 15px;
  white-space: nowrap;
  text-align: center;
`;

const Col = styled.col`
  width: ${p => p.$w}px;
`;

const ColHead = styled.th`
  height: 18px;
  padding: 2px 0 0;
  border-right: 1px solid #444;
  border-bottom: 1px solid #444;
  background: #b8b8b8;
  font-weight: normal;
`;

const Corner = styled.td`
  padding: 0;
  border: 1px solid #555;
  background: linear-gradient(135deg, #929292 72%, #555 72%);
`;

const RowHead = styled(ColHead)`
  height: ${p => (p.$title ? 18 : 20)}px;
`;

const Cell = styled.td`
  padding: 2px 0 0;
  border-right: 1px solid #4a1058;
  border-bottom: 1px solid ${p => (p.$title ? '#4a1058' : '#d3d9d6')};
`;

const VScroll = styled.div`
  display: flex;
  flex: none;
  flex-direction: column;
  width: 16px;
  background: linear-gradient(to right, #585858, #6a6a6a);
`;

const SplitHandle = styled.div`
  flex: none;
  height: 7px;
  margin: 1px 1px 0;
  border: 1px solid #333;
  background: linear-gradient(#888 2px, #444 2px, #444 3px, #888 3px);
`;

const ScrollArrow = styled.button`
  display: flex;
  flex: none;
  align-items: center;
  justify-content: center;
  width: 16px;
  height: 16px;
`;

const VTrackTop = styled.div`
  flex: 49;
`;

const VThumb = styled.div`
  flex: 160;
  margin: 0 1px 0 0;
  border: 1px solid #222;
  border-radius: 2px;
  background:
    repeating-linear-gradient(#aaa 0 1px, transparent 1px 3px) center / 7px 10px no-repeat,
    linear-gradient(to right, #7c7c7c, #555);
`;

const VTrackBottom = styled.div`
  flex: 155;
`;

const SheetBar = styled.div`
  display: flex;
  flex: none;
  height: 16px;
  border-top: 1px solid #333;
  background: #6a6a6a;
`;

const SheetNav = styled.div`
  display: flex;
  align-items: center;
  gap: 10px;
  width: 189px;
  padding-left: 5px;
`;

const SheetTab = styled.button`
  position: relative;
  display: flex;
  align-items: center;
  justify-content: center;
  min-width: 42px;
  padding: 0 14px 0 6px;
  color: #ddd;
  font-size: 14px;
  line-height: 15px;
  z-index: 0;

  &::before {
    content: '';
    position: absolute;
    inset: 0 6px 0 -6px;
    z-index: -1;
    border-right: 1px solid #2e2e2e;
    background: linear-gradient(#7c7c7c, #686868);
    transform: skewX(-39deg);
  }

  ${p => p.$active && css`
    width: 54px;
    margin-left: -8px;
    padding: 0 12px 0 6px;
    color: #333;
    z-index: 1;
    &::before {
      inset: 0;
      border: 0;
      background: #fff;
      clip-path: polygon(0 0, 100% 0, calc(100% - 12px) 100%, 3px 100%);
      transform: none;
    }
    & + button {
      margin-left: -8px;
    }
  `}
`;

const HScroll = styled.div`
  display: flex;
  align-items: center;
  width: 41%;
  margin-left: auto;
  padding-right: 16px;
`;

const HSplit = styled.div`
  flex: none;
  width: 7px;
  height: 14px;
  border: 1px solid #2e2e2e;
  background: linear-gradient(to right, #999 2px, #444 2px, #444 3px, #999 3px);
`;

const HThumb = styled.div`
  flex: 215;
  height: 15px;
  border: 1px solid #2b2b2b;
  border-radius: 2px;
  background:
    repeating-linear-gradient(to right, #999 0 1px, transparent 1px 2px) center / 8px 7px no-repeat,
    linear-gradient(#7c7c7c, #585858);
`;

const HTrack = styled.div`
  flex: 30;
`;

const StatusBar = styled.footer`
  display: flex;
  flex: none;
  align-items: center;
  height: 22px;
  border-top: 1px solid #2a2a2a;
  background: linear-gradient(#4e4e4e, #343434 60%, #2f2f2f);
  color: #e8e8e8;
`;

const Ready = styled.span`
  width: 42px;
  padding-left: 8px;
  border-right: 1px solid #222;
`;

const Stats = styled.div`
  display: flex;
  gap: 16px;
  margin-left: auto;
  padding-right: 11px;
  border-right: 1px solid #1c1c1c;
`;

const Views = styled.div`
  display: flex;
  margin: 0 9px 0 4px;
`;

const ViewButton = styled.button`
  display: flex;
  align-items: center;
  justify-content: center;
  width: 19px;
  height: 19px;
  border-radius: 2px;
  ${p => p.$on && highlight}
`;

const ZoomLabel = styled.label`
  width: 40px;
`;

const ZoomSlider = styled.input`
  appearance: none;
  width: 100px;
  height: 16px;
  background: linear-gradient(#999, #999) center / 100% 1px no-repeat;

  &::-webkit-slider-thumb {
    appearance: none;
    width: 9px;
    height: 12px;
    background: linear-gradient(#ddd, #999);
    clip-path: polygon(0 0, 100% 0, 100% 65%, 50% 100%, 0 65%);
  }
`;

const Grip = styled.span`
  align-self: flex-end;
  margin-left: 7px;
`;

// floats over the ribbon next to the clicked cell
const Mini = styled.div`
  position: absolute;
  left: 31px;
  top: 122px;
  width: 258px;
  padding-top: 1px;
  border: 1px solid #a6a9ae;
  border-radius: 3px;
  background: #fff;
`;

const MiniRow = styled.div`
  display: flex;
  align-items: center;
  height: 26px;
`;

const Combo = styled.span`
  display: flex;
  flex: none;
  align-items: center;
  width: ${p => p.$w}px;
  height: 26px;
  padding-right: 4px;
  border: 1px solid #d5d8dc;
  select {
    flex: 1;
    min-width: 0;
    padding-left: 2px;
    appearance: none;
  }
`;

const MiniButton = styled.button`
  display: flex;
  flex: none;
  align-items: center;
  justify-content: center;
  gap: 5px;
  width: ${p => (p.$wide ? 34 : 22)}px;
  height: 22px;
  border-radius: 3px;
  ${p => p.$serif && css`
    font-family: 'Liberation Serif', serif;
    font-size: 15px;
    font-weight: bold;
  `}
  ${p => p.$italic && 'font-style: italic;'}
  ${p => p.$on && highlight}
`;

const Menu = styled.div`
  position: absolute;
  left: 31px;
  top: 192px;
  width: 180px;
  border: 1px solid #a0a4aa;
  border-radius: 2px;
  background: linear-gradient(to right, #fff 24px, #dfe1e4 24px, #dfe1e4 25px, #fff 25px);
  box-shadow: 1px 1px 2px rgba(0, 0, 0, 0.4);
  color: #333;
`;

const MenuItem = styled.button`
  display: flex;
  align-items: center;
  width: 100%;
  height: 25px;
  border: 1px solid transparent;
  border-radius: 3px;
  white-space: nowrap;
  ${p => p.$hot && css`
    border-color: #e8b93a;
    background: linear-gradient(#fff3bc, #ffe58f 40%, #ffd759 50%, #ffe88e);
  `}
`;

const MenuIcon = styled.span`
  display: flex;
  flex: none;
  justify-content: center;
  width: 22px;
  margin-right: 10px;
`;

const MenuHeading = styled.div`
  display: flex;
  align-items: center;
  height: 22px;
  padding-left: 1px;
  background: linear-gradient(to right, transparent 26px, #eff1f5 26px);
  font-weight: bold;
`;

const PasteRow = styled.div`
  display: flex;
  gap: 6px;
  height: 30px;
  padding: 3px 0 0 29px;
`;

const PasteButton = styled.button`
  width: 24px;
  height: 24px;
`;

const MenuSeparator = styled.div`
  height: 4px;
  margin-left: 32px;
  background: repeating-linear-gradient(to right, #b8b8b8 0 2px, transparent 2px 4px) 0 1px / 100% 1px no-repeat;
`;

const SubmenuArrow = styled.span`
  margin-left: auto;
  padding-right: 8px;
`;
